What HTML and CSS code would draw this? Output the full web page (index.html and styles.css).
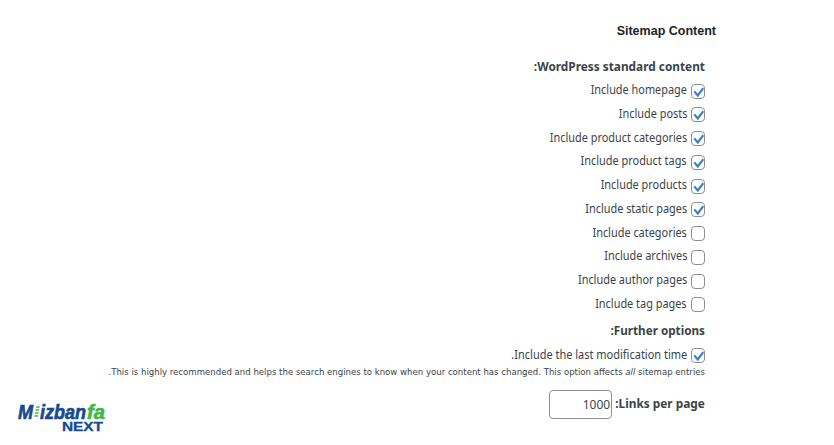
FILE: index.html
```html
<!DOCTYPE html>
<html lang="en" dir="rtl">
<head>
<meta charset="utf-8">
<title>Sitemap Content</title>
<link rel="stylesheet" href="styles.css">
</head>
<body>
<main class="panel">
  <h2 class="title"><span>Sitemap Content</span></h2>
  <section class="content">
    <h3 class="heading heading-standard"><span>WordPress standard content:</span></h3>
    <ul class="options">
      <li><label class="option"><i class="box on"></i><span>Include homepage</span></label></li>
      <li><label class="option"><i class="box on"></i><span>Include posts</span></label></li>
      <li><label class="option"><i class="box on"></i><span>Include product categories</span></label></li>
      <li><label class="option"><i class="box on"></i><span>Include product tags</span></label></li>
      <li><label class="option"><i class="box on"></i><span>Include products</span></label></li>
      <li><label class="option"><i class="box on"></i><span>Include static pages</span></label></li>
      <li><label class="option"><i class="box"></i><span>Include categories</span></label></li>
      <li><label class="option"><i class="box"></i><span>Include archives</span></label></li>
      <li><label class="option"><i class="box"></i><span>Include author pages</span></label></li>
      <li><label class="option"><i class="box"></i><span>Include tag pages</span></label></li>
    </ul>
    <h3 class="heading heading-further"><span>Further options:</span></h3>
    <label class="option option-time"><i class="box on"></i><span>Include the last modification time.</span></label>
    <p class="note">This is highly recommended and helps the search engines to know when your content has changed. This option affects <em>all</em> sitemap entries.</p>
    <div class="links"><span class="links-label">Links per page:</span><span class="number">1000</span></div>
  </section>
</main>
<svg class="logo" width="92" height="34" viewBox="0 0 92 34" direction="ltr">
  <text class="brand blue" x="1" y="18" textLength="15" lengthAdjust="spacingAndGlyphs">M</text>
  <path class="stripes" d="M19 6h3.6M18.5 9h3.6M18 12h3.6M17.5 15h3.6"/>
  <text class="brand blue" x="23" y="18" textLength="46" lengthAdjust="spacingAndGlyphs">izban</text>
  <text class="brand green" x="70" y="18" textLength="18" lengthAdjust="spacingAndGlyphs">fa</text>
  <text class="next blue" x="45" y="30" textLength="41" lengthAdjust="spacingAndGlyphs">NEXT</text>
</svg>
</body>
</html>
```
FILE: styles.css
```css
* { box-sizing: border-box; }
body { margin: 0; height: 445px; overflow: hidden; background: #fff; color: #3c434a; font: 12px/24px "Noto Sans", sans-serif; position: relative; }
h2, h3, p, ul { margin: 0; padding: 0; list-style: none; }
.panel { padding: 19px 118px 0 0; }
.title { font: bold 13px/24px "Liberation Sans", sans-serif; color: #1d2327; transform: scaleX(.962); transform-origin: right; }
.content { padding-right: 11px; }
.heading { font-size: 12px; line-height: 24px; font-weight: 700; transform: scaleX(.986); transform-origin: right; }
.heading-standard { margin-top: 12px; }
.options { margin-top: -1px; }
.option { display: flex; gap: 4px; height: 23.75px; line-height: 23.75px; }
.option span { transform: scaleX(.909); transform-origin: right; white-space: nowrap; }
.box { width: 14px; height: 15px; margin-top: 5.5px; border: 1px solid #8c8f94; border-radius: 4px; background: #fff; }
.on { background: url("data:image/svg+xml,%3Csvg xmlns='http://www.w3.org/2000/svg' viewBox='0 0 12 13'%3E%3Cpath d='M2.3 6.4l3.5 4L11.3 3.2' fill='none' stroke='%233582c4' stroke-width='2.2'/%3E%3C/svg%3E") center/12px 13px no-repeat; }
.heading-further { margin-top: 3.5px; transform: scaleX(.975); }
.option-time { line-height: 24.5px; }
.option-time .box { margin-top: 4.5px; }
.option-time span { transform: scaleX(.915); }
.note { font-family: "DejaVu Sans Condensed", "DejaVu Sans", sans-serif; font-stretch: condensed; font-size: 9.5px; line-height: 12px; margin-top: -.5px; white-space: nowrap; transform: scaleX(1.002); transform-origin: right; }
.links { display: flex; gap: 4px; margin-top: 11.5px; align-items: center; }
.links-label { font-weight: 700; transform: scaleX(.986); transform-origin: right; margin-left: -2px; }
.number { width: 63px; height: 29px; border: 1px solid #8c8f94; border-radius: 4px; line-height: 28px; padding-right: 1px; }
.logo { position: absolute; left: 17px; top: 401px; direction: ltr; }
.brand { font: italic bold 21px "Liberation Sans Narrow", "Liberation Sans", sans-serif; stroke-width: .7; }
.brand.blue { stroke: #174b91; }
.brand.green { stroke: #42b649; }
.next { font: bold 12px "Liberation Sans", sans-serif; stroke: #174b91; stroke-width: .3; }
.blue { fill: #174b91; }
.green { fill: #42b649; }
.stripes { stroke: #42b649; stroke-width: 1.6; fill: none; }
```
